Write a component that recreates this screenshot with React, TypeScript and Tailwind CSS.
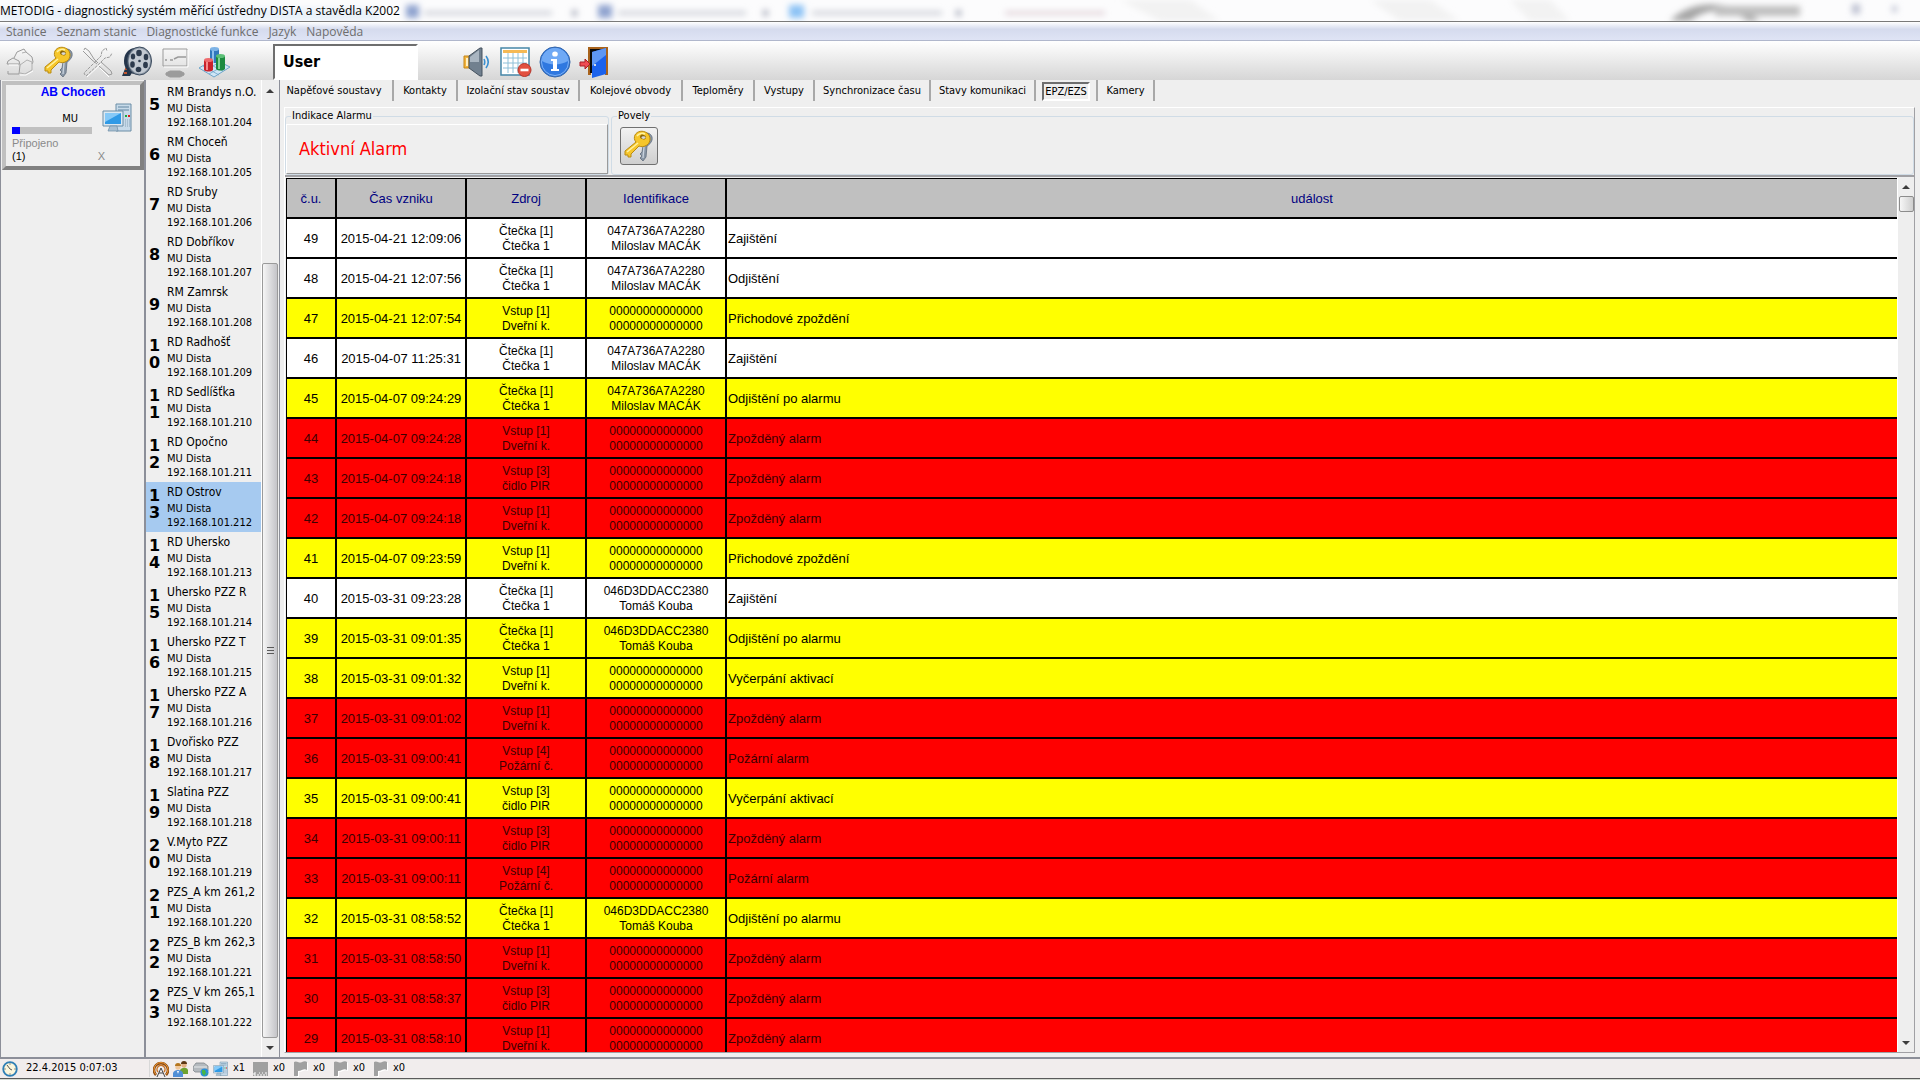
import { useState } from 'react';
import type { ReactNode } from 'react';
import clsx from 'clsx';

type Severity = 'normal' | 'warning' | 'alarm';

interface EventRow {
  id: number;
  time: string;
  source: [string, string];
  ident: [string, string];
  event: string;
  severity: Severity;
}

interface Station {
  no: number;
  name: string;
}

const READER: [string, string] = ['Čtečka [1]', 'Čtečka 1'];
const DOOR: [string, string] = ['Vstup [1]', 'Dveřní k.'];
const PIR: [string, string] = ['Vstup [3]', 'čidlo PIR'];
const FIRE: [string, string] = ['Vstup [4]', 'Požární č.'];
const MACAK: [string, string] = ['047A736A7A2280', 'Miloslav MACÁK'];
const KOUBA: [string, string] = ['046D3DDACC2380', 'Tomáš Kouba'];
const NOBODY: [string, string] = ['00000000000000', '00000000000000'];

const EVENTS: EventRow[] = [
  { id: 49, time: '2015-04-21 12:09:06', source: READER, ident: MACAK, event: 'Zajištění', severity: 'normal' },
  { id: 48, time: '2015-04-21 12:07:56', source: READER, ident: MACAK, event: 'Odjištění', severity: 'normal' },
  { id: 47, time: '2015-04-21 12:07:54', source: DOOR, ident: NOBODY, event: 'Přichodové zpoždění', severity: 'warning' },
  { id: 46, time: '2015-04-07 11:25:31', source: READER, ident: MACAK, event: 'Zajištění', severity: 'normal' },
  { id: 45, time: '2015-04-07 09:24:29', source: READER, ident: MACAK, event: 'Odjištění po alarmu', severity: 'warning' },
  { id: 44, time: '2015-04-07 09:24:28', source: DOOR, ident: NOBODY, event: 'Zpožděný alarm', severity: 'alarm' },
  { id: 43, time: '2015-04-07 09:24:18', source: PIR, ident: NOBODY, event: 'Zpožděný alarm', severity: 'alarm' },
  { id: 42, time: '2015-04-07 09:24:18', source: DOOR, ident: NOBODY, event: 'Zpožděný alarm', severity: 'alarm' },
  { id: 41, time: '2015-04-07 09:23:59', source: DOOR, ident: NOBODY, event: 'Přichodové zpoždění', severity: 'warning' },
  { id: 40, time: '2015-03-31 09:23:28', source: READER, ident: KOUBA, event: 'Zajištění', severity: 'normal' },
  { id: 39, time: '2015-03-31 09:01:35', source: READER, ident: KOUBA, event: 'Odjištění po alarmu', severity: 'warning' },
  { id: 38, time: '2015-03-31 09:01:32', source: DOOR, ident: NOBODY, event: 'Vyčerpání aktivací', severity: 'warning' },
  { id: 37, time: '2015-03-31 09:01:02', source: DOOR, ident: NOBODY, event: 'Zpožděný alarm', severity: 'alarm' },
  { id: 36, time: '2015-03-31 09:00:41', source: FIRE, ident: NOBODY, event: 'Požární alarm', severity: 'alarm' },
  { id: 35, time: '2015-03-31 09:00:41', source: PIR, ident: NOBODY, event: 'Vyčerpání aktivací', severity: 'warning' },
  { id: 34, time: '2015-03-31 09:00:11', source: PIR, ident: NOBODY, event: 'Zpožděný alarm', severity: 'alarm' },
  { id: 33, time: '2015-03-31 09:00:11', source: FIRE, ident: NOBODY, event: 'Požární alarm', severity: 'alarm' },
  { id: 32, time: '2015-03-31 08:58:52', source: READER, ident: KOUBA, event: 'Odjištění po alarmu', severity: 'warning' },
  { id: 31, time: '2015-03-31 08:58:50', source: DOOR, ident: NOBODY, event: 'Zpožděný alarm', severity: 'alarm' },
  { id: 30, time: '2015-03-31 08:58:37', source: PIR, ident: NOBODY, event: 'Zpožděný alarm', severity: 'alarm' },
  { id: 29, time: '2015-03-31 08:58:10', source: DOOR, ident: NOBODY, event: 'Zpožděný alarm', severity: 'alarm' },
];

const STATIONS: Station[] = [
  { no: 5, name: 'RM Brandys n.O.' },
  { no: 6, name: 'RM Choceň' },
  { no: 7, name: 'RD Sruby' },
  { no: 8, name: 'RD Dobříkov' },
  { no: 9, name: 'RM Zamrsk' },
  { no: 10, name: 'RD Radhošť' },
  { no: 11, name: 'RD Sedlíšťka' },
  { no: 12, name: 'RD Opočno' },
  { no: 13, name: 'RD Ostrov' },
  { no: 14, name: 'RD Uhersko' },
  { no: 15, name: 'Uhersko PZZ R' },
  { no: 16, name: 'Uhersko PZZ T' },
  { no: 17, name: 'Uhersko PZZ A' },
  { no: 18, name: 'Dvořisko PZZ' },
  { no: 19, name: 'Slatina PZZ' },
  { no: 20, name: 'V.Myto PZZ' },
  { no: 21, name: 'PZS_A km 261,2' },
  { no: 22, name: 'PZS_B km 262,3' },
  { no: 23, name: 'PZS_V km 265,1' },
];

const TABS = [
  { label: 'Napěťové soustavy', width: 'w-[114px]' },
  { label: 'Kontakty', width: 'w-16' },
  { label: 'Izolační stav soustav', width: 'w-[122px]' },
  { label: 'Kolejové obvody', width: 'w-[103px]' },
  { label: 'Teploměry', width: 'w-[72px]' },
  { label: 'Vystupy', width: 'w-[60px]' },
  { label: 'Synchronizace času', width: 'w-[116px]' },
  { label: 'Stavy komunikaci', width: 'w-[105px]' },
  { label: 'EPZ/EZS', width: 'w-[62px]' },
  { label: 'Kamery', width: 'w-[57px]' },
];

const MENU = ['Stanice', 'Seznam stanic', 'Diagnostické funkce', 'Jazyk', 'Napověda'];

const ROW_STYLE: Record<Severity, string> = {
  normal: 'bg-white text-black',
  warning: 'bg-[#ffff00] text-black',
  alarm: 'bg-[#ff0000] text-[#3c0000]',
};

/* ---------- Icons ---------- */

function KeysIcon() {
  return (
    <svg viewBox="0 0 32 32" className="size-8" aria-hidden="true">
      <path d="M21 3c6-1 9 3 8 7-1 3-3 5-5 6l-1 11-3 4-3-3 2-2-2-2 2-2 1-6z" fill="#8996a5" stroke="#5f6c7b" strokeWidth=".8" />
      <path d="M21 17l-1 11" stroke="#c9d3de" strokeWidth="1.3" />
      <path
        d="M12 5c2-4 8-5 12-2s4 9 0 12c-3 2-6 2-8 1l-8 8v3H5v-2H2v-4l11-9c-2-2-2-5-1-7z"
        fill="#f6c62b"
        stroke="#b98a10"
        strokeWidth="1"
      />
      <path d="M14 6c2-3 6-3 8-2M4 22l11-9" fill="none" stroke="#fff2a0" strokeWidth="1.6" />
      <ellipse cx="20" cy="7" rx="3" ry="2.3" fill="#8a6508" transform="rotate(25 20 7)" />
      <ellipse cx="20.500" cy="7.600" rx="2" ry="1.300" fill="#d8d8d8" />
    </svg>
  );
}

function HouseIcon() {
  return (
    <svg viewBox="0 0 28 28" className="size-7" fill="none" stroke="#9b9b9b" aria-hidden="true">
      <path d="M1 16l1-3 5-3 6 3 1 4-1 9H2v-3M1 16h12M8 10l3-6 7-3 2 3 6 5 1 5-1 2" />
      <path d="M14 17l7-5 5 2v8l-7 4-5-1M20 4l-4 1" stroke="#b0b0b0" />
      <path d="M3 17h9M14 27h6l7-4" stroke="#fff" />
    </svg>
  );
}

function ToolsIcon() {
  return (
    <svg viewBox="0 0 32 32" className="size-8" fill="none" stroke="#9b9b9b" aria-hidden="true">
      <path d="M2 4l1-2 4 3 5 8 4 4M1 5l9 9 5 4" />
      <path d="M17 20l10 9 3-1-1-3-10-9" />
      <path d="M3 29l-1-2 12-12 5-5 1-5 4-3 1 3M4 30l14-13 5-5 5-1 2-4" strokeDasharray="3 1" />
      <path d="M5 31l14-13M18 22l9 9" stroke="#fff" />
    </svg>
  );
}

function ReelIcon() {
  return (
    <svg viewBox="0 0 32 32" className="size-8" aria-hidden="true">
      <path d="M6 18L1 30h8l3-5z" fill="#243447" />
      <path d="M3 26h3v2H3zM4 22h2v2H4z" fill="#c3552e" />
      <ellipse cx="14" cy="15" rx="11" ry="13" fill="#24344a" />
      <ellipse cx="18.500" cy="15" rx="12" ry="14" fill="#8d98a5" stroke="#39495c" />
      <ellipse cx="18.500" cy="15" rx="10.500" ry="12.500" fill="#c2c9d1" />
      <g fill="#2c3a4c">
        <ellipse cx="18" cy="7" rx="2.800" ry="3.200" />
        <ellipse cx="25" cy="11" rx="2.300" ry="3.200" />
        <ellipse cx="24.500" cy="19" rx="2.400" ry="3.200" />
        <ellipse cx="17.500" cy="23.500" rx="2.800" ry="2.800" />
        <ellipse cx="11.500" cy="18.500" rx="2.300" ry="3.200" />
        <ellipse cx="12" cy="10.500" rx="2.200" ry="3" />
        <circle cx="18.500" cy="15" r="1.300" />
      </g>
    </svg>
  );
}

function MonitorIcon() {
  return (
    <svg viewBox="0 0 28 32" className="h-8 w-7" fill="none" stroke="#9b9b9b" aria-hidden="true">
      <path d="M1 3h24v17H1z" />
      <path d="M2 21h24V4" stroke="#fff" />
      <path d="M3 14h2M8 14h3M12 13l4-2h8" strokeWidth="1.500" />
      <path d="M8 25h10l4 2v2l-4 2H8l-4-2v-2z" fill="#9b9b9b" />
    </svg>
  );
}

function BarsIcon() {
  return (
    <svg viewBox="0 0 34 32" className="h-8 w-[34px]" aria-hidden="true">
      <path d="M1 22l15-9 16 8-16 10z" fill="#cfe6f6" stroke="#6ea5c9" />
      <path d="M5 20l16 9M9 17l16 8M6 25l16-9M11 28l16-9" stroke="#6ea5c9" strokeWidth=".8" />
      <path d="M12 3v14h9V3z" fill="#3177bd" />
      <path d="M14 4v13h2V4z" fill="#8fc0ec" />
      <ellipse cx="16.500" cy="3" rx="4.500" ry="2" fill="#7db3e6" />
      <path d="M6 14v10c2 2 7 2 9 0V14z" fill="#c9222b" />
      <path d="M8 15v9h2v-9z" fill="#f48a8c" />
      <ellipse cx="10.500" cy="14" rx="4.500" ry="2" fill="#ee6a6d" />
      <path d="M18 10v13c2 2 7 2 9 0V10z" fill="#1b8a3f" />
      <path d="M20 11v12h2V11z" fill="#7fd494" />
      <ellipse cx="22.500" cy="10" rx="4.500" ry="2" fill="#5cbf77" />
    </svg>
  );
}

function SpeakerIcon() {
  return (
    <svg viewBox="0 0 28 32" className="h-8 w-7" aria-hidden="true">
      <path d="M1 10h6v12H1z" fill="#f3b33b" stroke="#c38518" />
      <path d="M3 12h2v8H3z" fill="#fff0c4" />
      <path d="M6 10L17 2h2v28h-2L6 22z" fill="#71808f" stroke="#46525f" />
      <path d="M7 11l9-7v12H7z" fill="#a9b5c1" />
      <path d="M21 13c1 2 1 4 0 6M23 10c3 4 3 8 0 12" fill="none" stroke="#3a8fd0" strokeWidth="1.600" />
    </svg>
  );
}

function CalendarIcon() {
  return (
    <svg viewBox="0 0 32 32" className="size-8" aria-hidden="true">
      <path d="M1 2h28v27H1z" fill="#fff" stroke="#4687a8" strokeWidth="1.500" />
      <path d="M3 4h24v3H3z" fill="#f5b955" />
      <path d="M3 12h24M3 17h24M3 22h24M8 7v20M13 7v20M18 7v20M23 7v20" stroke="#8fc0d8" />
      <circle cx="24.500" cy="24" r="6.500" fill="#e2503f" stroke="#b5352a" />
      <path d="M20.500 22.700h8v2.600h-8z" fill="#fff" />
    </svg>
  );
}

function InfoIcon() {
  return (
    <svg viewBox="0 0 32 32" className="size-8" aria-hidden="true">
      <circle cx="16" cy="16" r="15" fill="#2f78e0" stroke="#3666a8" />
      <circle cx="16" cy="16" r="13.500" fill="none" stroke="#7fb2f5" />
      <path d="M3 15a13 13 0 0126 0c-7 4-18 5-26 0z" fill="#6fa9f5" />
      <ellipse cx="16" cy="8" rx="2.800" ry="2.600" fill="#fff" />
      <path d="M12 13h6v10h2v2h-8v-2h2v-8h-2z" fill="#fff" />
    </svg>
  );
}

function DoorIcon() {
  return (
    <svg viewBox="0 0 32 32" className="size-8" aria-hidden="true">
      <path d="M10 1h20v28h-3V4H13v25h-3z" fill="#a8621b" />
      <path d="M12 3h15v24H12z" fill="#0a0a0a" />
      <path d="M14 6l14-4v26l-14 4z" fill="#1c62ec" />
      <path d="M14 6l14-4v7L14 20z" fill="#5e97f5" />
      <path d="M16 18h2v2h-2z" fill="#cfd8e8" />
      <path d="M2 16h5v-3l5 5-5 5v-3H2z" fill="#ef4b52" stroke="#a81e26" />
    </svg>
  );
}

function ComputerIcon({ className }: { className?: string }) {
  return (
    <svg viewBox="0 0 32 32" className={className} aria-hidden="true">
      <path d="M14 2h15v27H14z" fill="#c7dae9" stroke="#6b8da6" />
      <path d="M16 5h11M16 8h11" stroke="#84a3b9" strokeWidth="1.500" />
      <path d="M23 13h2v2h-2z" fill="#19a83a" />
      <path d="M26 13h2v2h-2z" fill="#e02020" />
      <path d="M23 18h5M23 20h5M23 22h5M23 24h5" stroke="#8aa4b8" strokeDasharray="1 1" />
      <path d="M1 9h20v15H1z" fill="#dce8f1" stroke="#6b8da6" />
      <path d="M3 11h16v11H3z" fill="#2f9ae6" />
      <path d="M3 11h16L3 20z" fill="#86c9f7" />
      <path d="M8 24h7l1 5H6z" fill="#a9c0d1" stroke="#6b8da6" strokeWidth=".7" />
    </svg>
  );
}

function ClockIcon() {
  return (
    <svg viewBox="0 0 16 16" className="size-4" aria-hidden="true">
      <circle cx="8" cy="8" r="6.800" fill="#fbf6dc" stroke="#2f7fb5" strokeWidth="1.800" />
      <path d="M8 8L5 4M8 8l2 1" stroke="#555" />
      <path d="M8 2.500v1M8 12.500v1M2.500 8h1M12.500 8h1" stroke="#333" />
    </svg>
  );
}

function AntennaIcon() {
  return (
    <svg viewBox="0 0 16 16" className="size-4" fill="none" aria-hidden="true">
      <path d="M3 14a7 7 0 1110 0" stroke="#8a4a12" strokeWidth="2.600" />
      <path d="M3 13.500a7 7 0 1110 0" stroke="#f29a34" strokeWidth="1" />
      <path d="M5 11a4 4 0 116 0" stroke="#c8742a" strokeWidth="1.500" />
      <path d="M8 7l-4 9M8 7l4 9M6 12h4" stroke="#444" />
    </svg>
  );
}

function UsersIcon() {
  return (
    <svg viewBox="0 0 16 16" className="size-4" aria-hidden="true">
      <circle cx="11" cy="4" r="2.700" fill="#e2b184" />
      <path d="M8 3a3 3 0 016 0z" fill="#5d3713" />
      <path d="M7 13V9c2-3 7-3 8 0v4z" fill="#6ea22f" />
      <circle cx="5" cy="6" r="2.700" fill="#efc69c" />
      <path d="M2 5a3 3 0 016 0z" fill="#b5761f" />
      <path d="M0 16v-4c1-4 9-4 10 0v4z" fill="#4f8fd6" />
      <path d="M4 10h2l-1 3z" fill="#fff" />
    </svg>
  );
}

function DriveIcon() {
  return (
    <svg viewBox="0 0 16 16" className="size-4" aria-hidden="true">
      <path d="M0 6l3-4h8l4 3v5l-3 1H2L0 9z" fill="#b4b9be" stroke="#80868c" strokeWidth=".8" />
      <path d="M1 6h13" stroke="#e6e9eb" />
      <circle cx="11.500" cy="11.500" r="4" fill="#2b8fd8" />
      <path d="M9 9l3 0 1 3-2 3-2-3zM13 13l2-1-1 2z" fill="#47b545" />
    </svg>
  );
}

function FlagIcon() {
  return (
    <svg viewBox="0 0 16 16" className="size-4" aria-hidden="true">
      <path d="M2 2c3-2 5 2 8 0 2-1 4-1 5 0v8c-3-2-5 1-9 1v5H4V11H2z" fill="#fff" />
      <path d="M1 1c3-2 5 2 8 0 2-1 4-1 5 0v8c-3-2-5 1-9 1v5H1z" fill="#a0a0a0" />
    </svg>
  );
}

function ModuleIcon() {
  return (
    <svg viewBox="0 0 16 16" className="size-4" aria-hidden="true">
      <path d="M0 1h15v14H0z" fill="#a0a0a0" />
      <path d="M1 12v3M1 12h2M6 12h1M9 12h1M12 12h3M1 14h13" stroke="#fff" strokeDasharray="2 1" />
    </svg>
  );
}

function ScrollArrow({ up }: { up?: boolean }) {
  return (
    <svg viewBox="0 0 8 4" className="h-1 w-2" aria-hidden="true">
      <path d={up ? 'M0 4L4 0l4 4z' : 'M0 0l4 4 4-4z'} fill="#3c3c3c" />
    </svg>
  );
}

/* ---------- Window parts ---------- */

function TitleBar() {
  return (
    <header className="relative h-[22px] shrink-0 overflow-hidden border-b border-[#7a7a7a] bg-[#fcfcfd]">
      <svg viewBox="0 0 1920 21" preserveAspectRatio="none" className="absolute inset-0 h-full w-full" aria-hidden="true">
        <defs>
          <filter id="glass" x="-20%" y="-50%" width="140%" height="200%">
            <feGaussianBlur stdDeviation="3" />
          </filter>
        </defs>
        <g filter="url(#glass)">
          <path d="M0 8h380v13H0z" fill="#e9f1f9" />
          <path d="M406 5h13v13h-13zM598 5h14v13h-14z" fill="#8fa3cf" />
          <path d="M789 5h15v13h-15z" fill="#8cc2f5" />
          <path d="M424 11h128v4H424zM618 11h128v4H618zM812 11h130v4H812z" fill="#cdd0d8" />
          <path d="M572 10h5v6h-5zM763 10h5v6h-5zM956 10h5v6h-5z" fill="#a4a9b8" />
          <path d="M1005 11h100v4h-100z" fill="#e2d4da" />
          <path d="M1120 0h70l30 21h-60zM1370 0h60l30 21h-60zM1510 0h40l20 21h-40z" fill="#f2f2f2" />
          <path d="M1670 21c20-22 60-22 90 0l-12 0c-20-14-40-14-58 0z" fill="#a4a4a4" />
          <path d="M1715 6h85v10h-85z" fill="#bebebe" />
          <path d="M1852 4h8v10h-8zM1892 6h5v6h-5z" fill="#bcbfd0" />
        </g>
      </svg>
      <h1 className="relative font-['Open_Sans',sans-serif] text-xs leading-[22px] text-black">
        METODIG - diagnostický systém měřící ústředny DISTA a stavědla K2002
      </h1>
    </header>
  );
}

function MenuBar() {
  return (
    <nav className="flex h-[19px] shrink-0 items-center gap-2.5 border-b border-[#b0b7cc] bg-linear-to-b from-white via-[#d5dbee] via-40% to-[#dfe4f5] px-1.5 pt-px">
      {MENU.map((item) => (
        <button key={item} type="button" className="font-['Open_Sans',sans-serif] text-xs leading-4 text-[#6d6d6d]">
          {item}
        </button>
      ))}
    </nav>
  );
}

function ToolButton({ label, children }: { label: string; children: ReactNode }) {
  return (
    <button type="button" aria-label={label} className="flex w-[39px] justify-center">
      {children}
    </button>
  );
}

function Toolbar() {
  return (
    <div className="flex h-[39px] shrink-0 items-center bg-linear-to-b from-white to-[#d6d6d6] pt-[2px]">
      <div className="flex w-[273px] items-center">
        <ToolButton label="Stanice"><HouseIcon /></ToolButton>
        <ToolButton label="Přihlášení"><KeysIcon /></ToolButton>
        <ToolButton label="Nastavení"><ToolsIcon /></ToolButton>
        <ToolButton label="Záznam"><ReelIcon /></ToolButton>
        <ToolButton label="Monitor"><MonitorIcon /></ToolButton>
        <ToolButton label="Grafy"><BarsIcon /></ToolButton>
      </div>
      <input
        aria-label="Uživatel"
        defaultValue="User"
        className="h-9 w-[145px] border-2 border-r-white border-b-white border-t-[#6e6e6e] border-l-[#6e6e6e] bg-white px-2 font-['DejaVu_Sans_Condensed','DejaVu_Sans',sans-serif] text-base font-bold text-black outline-none"
      />
      <div className="ml-[39px] flex items-center">
        <ToolButton label="Zvuk"><SpeakerIcon /></ToolButton>
        <ToolButton label="Události"><CalendarIcon /></ToolButton>
        <ToolButton label="Informace"><InfoIcon /></ToolButton>
        <ToolButton label="Konec"><DoorIcon /></ToolButton>
      </div>
    </div>
  );
}

function StationCard() {
  return (
    <div className="mt-px ml-px border-4 border-t-[#c0c0c0] border-l-[#c0c0c0] border-r-[#808080] border-b-[#808080] px-[6px] pb-[3px] font-['Liberation_Sans',sans-serif] text-[11px]">
      <h2 className="text-center text-xs leading-[14px] font-bold text-[#0000ff]">AB Choceň</h2>
      <div className="mt-[3px] flex justify-between">
        <div className="w-20">
          <p className="mt-2.5 pr-2 text-right font-['DejaVu_Sans_Condensed','DejaVu_Sans',sans-serif] leading-[14px] text-black">
            <span className="pr-1.5">MU</span>
          </p>
          <div className="mt-px h-[7px] bg-[#c0c0c0]">
            <div className="h-full w-2 bg-[#0000ff]" />
          </div>
        </div>
        <ComputerIcon className="size-8" />
      </div>
      <p className="mt-[3px] leading-[13px] text-[#8a8a8a]">Připojeno</p>
      <div className="flex justify-between pr-[29px] leading-[13px]">
        <span className="text-black">(1)</span>
        <button type="button" className="text-[#8a8a8a]">X</button>
      </div>
    </div>
  );
}

function StationList() {
  const [selected, setSelected] = useState(13);

  return (
    <div className="flex w-[134px] shrink-0 border-r border-[#8c8f99]">
      <ul className="w-[115px] overflow-hidden pt-[2px] font-['DejaVu_Sans_Condensed','DejaVu_Sans',sans-serif] text-black">
        {STATIONS.map((station) => (
          <li key={station.no}>
            <button
              type="button"
              onClick={() => setSelected(station.no)}
              className={clsx(
                'flex h-[50px] w-full items-center gap-1.5 overflow-hidden pl-[3px] text-left',
                station.no === selected && 'bg-[#a6caf0]',
              )}
            >
              <span className="w-3 shrink-0 pb-1.5 font-['DejaVu_Sans',sans-serif] text-base leading-[17px] font-bold break-all">
                {station.no}
              </span>
              <span className="flex flex-col whitespace-nowrap">
                <span className="mb-[2px] text-xs leading-[15px]">{station.name}</span>
                <span className="text-[11px] leading-[14px]">MU Dista</span>
                <span className="text-[11px] leading-[14px]">192.168.101.{station.no + 199}</span>
              </span>
            </button>
          </li>
        ))}
      </ul>
      <div className="flex w-[17px] flex-col items-center border-l border-white bg-[#eeeeee]">
        <div className="flex h-[21px] shrink-0 items-center"><ScrollArrow up /></div>
        <div className="h-[162px] shrink-0" />
        <div className="flex w-4 flex-1 flex-col items-center justify-center gap-[2px] rounded-[2px] border border-[#9a9a9a] bg-linear-to-r from-[#f6f6f6] to-[#c4c4c8]">
          <i className="h-px w-[7px] bg-[#5a5a5a]" />
          <i className="h-px w-[7px] bg-[#5a5a5a]" />
          <i className="h-px w-[7px] bg-[#5a5a5a]" />
        </div>
        <div className="flex h-[19px] shrink-0 items-center"><ScrollArrow /></div>
      </div>
    </div>
  );
}

function TabStrip() {
  const [active, setActive] = useState('EPZ/EZS');

  return (
    <div role="tablist" className="flex h-[21px] font-['DejaVu_Sans_Condensed','DejaVu_Sans',sans-serif] text-[11px] whitespace-nowrap text-black">
      {TABS.map((tab) => (
        <button
          key={tab.label}
          type="button"
          role="tab"
          aria-selected={tab.label === active}
          onClick={() => setActive(tab.label)}
          className={clsx('flex shrink-0 items-center justify-center border-r-2 border-[#a8a8a8] pt-[2px] first:pr-1', tab.width)}
        >
          {tab.label === active ? (
            <span className="border-2 border-t-[#6e6e6e] border-l-[#6e6e6e] border-r-white border-b-white px-px leading-[15px]">
              {tab.label}
            </span>
          ) : (
            tab.label
          )}
        </button>
      ))}
    </div>
  );
}

function EventTable() {
  return (
    <div className="flex min-h-0 flex-1 border-t-2 border-[#a0a0a4] pt-px pl-px">
      <div className="min-w-0 flex-1 overflow-hidden">
        <table className="w-full table-fixed border-separate border-spacing-0 border-t border-l border-black font-['Liberation_Sans',sans-serif]">
          <colgroup>
            <col className="w-[50px]" />
            <col className="w-[130px]" />
            <col className="w-[120px]" />
            <col className="w-[140px]" />
            <col />
          </colgroup>
          <thead>
            <tr className="h-10 bg-[#c0c0c0] text-[13px] text-[#000080]">
              {['č.u.', 'Čas vzniku', 'Zdroj', 'Identifikace'].map((title) => (
                <th key={title} className="border-r-2 border-b-2 border-black p-0 pt-[2px] font-normal">{title}</th>
              ))}
              <th className="border-b-2 border-black p-0 pt-[2px] font-normal">událost</th>
            </tr>
          </thead>
          <tbody>
            {EVENTS.map((row) => (
              <tr key={row.id} className={clsx('h-10 text-center', ROW_STYLE[row.severity])}>
                <td className="border-r-2 border-b-2 border-black p-0 pt-[2px] text-[13px]">{row.id}</td>
                <td className="border-r-2 border-b-2 border-black p-0 pt-[2px] text-[13px] whitespace-nowrap">{row.time}</td>
                <td className="border-r-2 border-b-2 border-black p-0 pt-[2px] text-xs leading-[15px]">
                  {row.source[0]}<br />{row.source[1]}
                </td>
                <td className="border-r-2 border-b-2 border-black p-0 pt-[2px] text-xs leading-[15px]">
                  {row.ident[0]}<br />{row.ident[1]}
                </td>
                <td className="border-b-2 border-black p-0 pt-[2px] pl-px text-left text-[13px]">{row.event}</td>
              </tr>
            ))}
          </tbody>
        </table>
      </div>
      <div className="flex w-[17px] shrink-0 flex-col items-center border-l border-white bg-[#eeeeee]">
        <div className="flex h-[18px] items-center"><ScrollArrow up /></div>
        <div className="h-4 w-[15px] rounded-[2px] border border-[#8c8c8c] bg-linear-to-r from-[#f6f6f6] to-[#cfcfcf]" />
        <div className="flex-1" />
        <div className="flex h-[18px] items-center"><ScrollArrow /></div>
      </div>
    </div>
  );
}

function AlarmPanel() {
  return (
    <div className="flex h-[67px] shrink-0 gap-[2px] font-['DejaVu_Sans_Condensed','DejaVu_Sans',sans-serif] text-[11px] text-black">
      <fieldset className="w-[324px] rounded-[3px] border border-[#d0dce6]">
        <legend className="ml-[5px] px-px leading-4">Indikace Alarmu</legend>
        <div className="flex h-[50px] items-center border border-t-white border-l-white border-r-[#9a9a9a] border-b-[#9a9a9a] pl-3 text-lg text-[#ff0000]">
          Aktivní Alarm
        </div>
      </fieldset>
      <fieldset className="flex-1 rounded-[3px] border border-[#d0dce6]">
        <legend className="ml-[5px] px-px leading-4">Povely</legend>
        <button
          type="button"
          aria-label="Povel klíč"
          className="mt-[3px] ml-2 flex size-[38px] items-center justify-center rounded-[3px] border border-[#707070] bg-linear-to-b from-[#f2f2f2] to-[#cfcfcf]"
        >
          <KeysIcon />
        </button>
      </fieldset>
    </div>
  );
}

function StatusBar() {
  const counters = [
    { icon: <ModuleIcon />, text: 'x0' },
    { icon: <FlagIcon />, text: 'x0' },
    { icon: <FlagIcon />, text: 'x0' },
    { icon: <FlagIcon />, text: 'x0' },
  ];

  return (
    <footer className="flex h-[19px] shrink-0 items-center bg-[#f1eded] font-['DejaVu_Sans_Condensed','DejaVu_Sans',sans-serif] text-[11px] text-black">
      <div className="flex w-[150px] items-center gap-2 border-r border-[#d8d8d8] pl-[2px]">
        <ClockIcon />
        <span>22.4.2015 0:07:03</span>
      </div>
      <div className="flex w-[103px] items-center gap-1 pl-[3px]">
        <AntennaIcon />
        <UsersIcon />
        <DriveIcon />
        <ComputerIcon className="size-4" />
        <span>x1</span>
      </div>
      {counters.map((counter, index) => (
        <div key={index} className="flex w-10 items-center gap-1">
          {counter.icon}
          <span>{counter.text}</span>
        </div>
      ))}
    </footer>
  );
}

export default function App() {
  return (
    <div className="flex h-screen flex-col overflow-hidden bg-[#efefef]">
      <TitleBar />
      <MenuBar />
      <Toolbar />
      <div className="flex min-h-0 flex-1 border-b-2 border-[#8c8f99]">
        <aside className="w-[146px] shrink-0 border-r-2 border-l border-[#8c8f99]">
          <StationCard />
        </aside>
        <StationList />
        <main className="flex min-w-0 flex-1 flex-col pb-1">
          <TabStrip />
          <div className="mt-1.5 mr-[5px] ml-1 flex min-h-0 flex-1 flex-col border border-t-white border-l-white border-r-[#a0a0a4] border-b-[#a0a0a4]">
            <AlarmPanel />
            <EventTable />
          </div>
        </main>
      </div>
      <StatusBar />
      <div className="flex h-[2px] shrink-0 border-t border-[#5a5a5a] bg-[#d5dad2]" />
    </div>
  );
}
